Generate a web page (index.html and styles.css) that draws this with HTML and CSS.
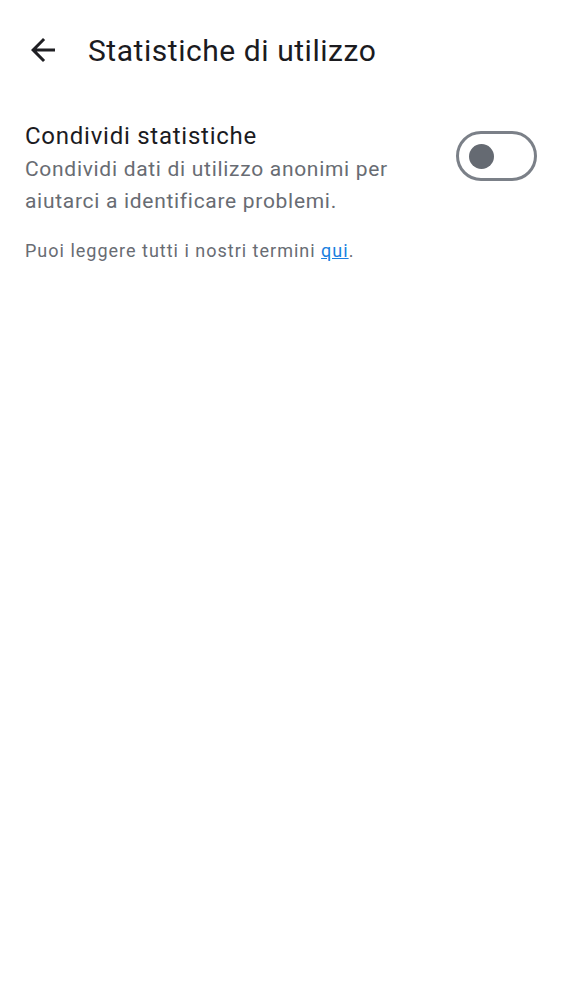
FILE: index.html
```html
<!DOCTYPE html>
<html lang="it">
<head>
<meta charset="utf-8">
<link rel="stylesheet" href="styles.css">
</head>
<body>
<header class="topbar">
  <button class="back" aria-label="Indietro">
    <svg width="36" height="36" viewBox="0 0 24 24"><path d="M20 11H7.83l5.59-5.59L12 4l-8 8 8 8 1.41-1.41L7.83 13H20v-2z" fill="#1f1f23"/></svg>
  </button>
  <h1 class="title">Statistiche di utilizzo</h1>
</header>
<main class="content">
  <div class="setting">
    <div class="texts">
      <div class="label">Condividi statistiche</div>
      <div class="desc">Condividi dati di utilizzo anonimi per aiutarci a identificare problemi.</div>
    </div>
    <div class="switch"><span class="thumb"></span></div>
  </div>
  <p class="note">Puoi leggere tutti i nostri termini <a href="#" class="link">qui</a>.</p>
</main>
</body>
</html>
```
FILE: styles.css
```css
* { box-sizing: border-box; }
body {
  margin: 0;
  background: #ffffff;
  font-family: Roboto, "Noto Sans", sans-serif;
  color: #1b1b1f;
}
.topbar {
  display: flex;
  align-items: center;
  height: 100px;
  padding: 0 0 0 25px;
}
.back {
  width: 36px;
  height: 36px;
  padding: 0;
  border: 0;
  background: none;
  display: flex;
  align-items: center;
  justify-content: center;
  margin-right: 27px;
}
.title {
  margin: 0;
  font-size: 30px;
  font-weight: 400;
  letter-spacing: 0.55px;
  color: #1b1b1f;
}
.content {
  padding: 19px 25px 0 25px;
}
.setting {
  display: flex;
  align-items: flex-start;
  justify-content: space-between;
}
.texts {
  width: 400px;
}
.label {
  font-size: 24px;
  line-height: 34px;
  letter-spacing: 0.75px;
  color: #1b1b1f;
}
.desc {
  font-size: 21px;
  line-height: 32px;
  letter-spacing: 0.7px;
  color: #686c73;
}
.switch {
  margin-top: 12px;
  width: 81px;
  height: 50px;
  border: 3px solid #7b8088;
  border-radius: 25px;
  display: flex;
  align-items: center;
  padding-left: 10px;
}
.thumb {
  width: 25px;
  height: 25px;
  border-radius: 50%;
  background: #656a72;
}
.note {
  margin: 21px 0 0 0;
  font-size: 18px;
  line-height: 26px;
  letter-spacing: 1px;
  color: #686c73;
}
.link {
  color: #1a7fe0;
  text-decoration: underline;
}
```
